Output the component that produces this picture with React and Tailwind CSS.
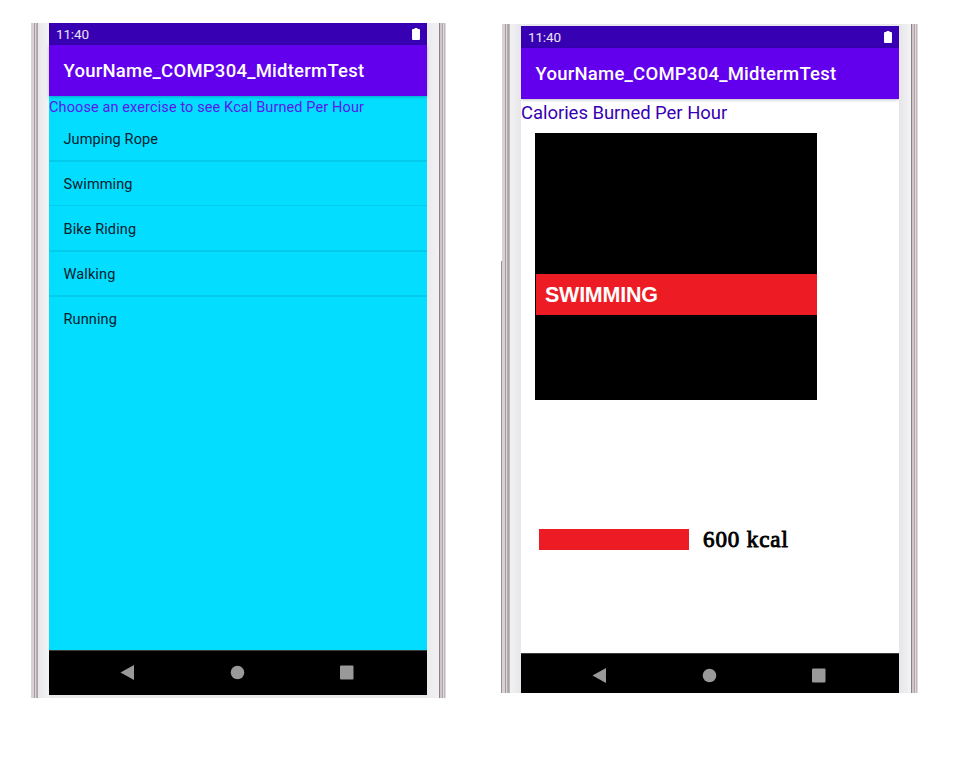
import React from "react";

const EXERCISES = ["Jumping Rope", "Swimming", "Bike Riding", "Walking", "Running"];

function StatusBar() {
  return (
    <div className="flex h-[22px] shrink-0 items-center justify-between bg-[#3700b3] pl-[7px] pr-[7px]">
      <span className="text-[13.500px] leading-[22px] tracking-[-0.15px] text-white/90">11:40</span>
      <svg width="8" height="12" viewBox="0 0 8 12" fill="#fff">
        <path d="M2.500 0h3v1H7a1 1 0 0 1 1 1v9a1 1 0 0 1-1 1H1a1 1 0 0 1-1-1V2a1 1 0 0 1 1-1h1.500z" />
      </svg>
    </div>
  );
}

function AppBar() {
  return (
    <div className="z-10 flex h-[51px] shrink-0 items-center bg-[#6200ee] pl-[14.500px] pt-[2px] shadow-[0_1px_3px_rgba(0,0,0,0.25)]">
      <h1 className="whitespace-nowrap text-[18.500px] font-medium tracking-[0.24px] text-white">YourName_COMP304_MidtermTest</h1>
    </div>
  );
}

function NavBar({ className }) {
  return (
    <div className={"shrink-0 border-t border-[#3c3c3c] bg-black " + className}>
      <svg width="378" height="44" viewBox="0 0 378 44" fill="#999">
        <path d="M71.500 21.500 85 14v15z" />
        <circle cx="188.500" cy="21.500" r="6.800" />
        <rect x="291" y="14.500" width="13.500" height="14" rx="1" />
      </svg>
    </div>
  );
}

function LeftRail() {
  return (
    <div className="flex w-[7px] shrink-0">
      <div className="w-[3px] bg-[#d8d0d3]" />
      <div className="w-px bg-[#a39c9f]" />
      <div className="w-px bg-[#ddd5d8]" />
      <div className="w-px bg-[#b5adb0]" />
      <div className="w-px bg-[#aaa2a6]" />
    </div>
  );
}

function RightRail() {
  return (
    <div className="flex w-[7px] shrink-0">
      <div className="w-px bg-[#858185]" />
      <div className="w-[2px] bg-[#cfc6ca]" />
      <div className="w-px bg-[#b0a6aa]" />
      <div className="w-px bg-[#ded6d8]" />
      <div className="w-px bg-[#c3babd]" />
      <div className="w-px bg-[#ddd7d9]" />
    </div>
  );
}

function ExerciseList() {
  return (
    <div className="flex h-[675px] w-[415px] bg-[#e9e9eb]">
      <LeftRail />
      <div className="w-[11px] shrink-0 bg-linear-to-r from-[#e8e8eb] to-[#f3f3f5]" />
      <div className="flex h-[672px] w-[378px] shrink-0 flex-col bg-[#03ddff]">
        <StatusBar />
        <AppBar />
        <div className="flex min-h-0 flex-1 flex-col">
          <p className="h-[20px] whitespace-nowrap text-[14.500px] leading-[23px] tracking-[0.11px] text-[#5a18ee]">
            Choose an exercise to see Kcal Burned Per Hour
          </p>
          <ul>
            {EXERCISES.map((name, i) => (
              <li
                key={name}
                className={
                  "h-[45px] border-[#03cbec] pl-[14.500px] text-[14.500px] leading-[47px] tracking-[0.12px] text-[#05202a] " +
                  (i === EXERCISES.length - 1 ? "" : i === 1 ? "border-b" : "border-b-2 -mb-px h-[46px]")
                }
              >
                {name}
              </li>
            ))}
          </ul>
        </div>
        <NavBar className="h-[45px]" />
      </div>
      <div className="w-[12px] shrink-0 bg-linear-to-r from-[#eaeaec] to-[#f2f2f4]" />
      <RightRail />
    </div>
  );
}

function CaloriesDetail() {
  return (
    <div className="flex h-[669px] w-[417px]">
      <div className="w-px shrink-0 pt-[237px]">
        <div className="h-full bg-[#969296]" />
      </div>
      <div className="flex w-[416px] bg-[#e9e9eb]">
        <LeftRail />
        <div className="w-px shrink-0 bg-[#bdb6ba]" />
        <div className="w-[11px] shrink-0 bg-linear-to-r from-[#f2f2f4] to-[#e6e6e9]" />
        <div className="mt-[2px] flex w-[378px] shrink-0 flex-col overflow-hidden bg-white">
          <StatusBar />
          <AppBar />
          <div className="flex min-h-0 flex-1 flex-col">
            <p className="h-[34px] whitespace-nowrap text-[18.500px] leading-[28px] tracking-[-0.05px] text-[#3700b3]">
              Calories Burned Per Hour
            </p>
            <div className="ml-[14px] h-[267px] w-[282px] shrink-0 bg-black pl-px pt-[141px]">
              <div className="h-[41px] bg-[#ed1c24] pl-[9px] font-['Liberation_Sans',sans-serif] text-[21.500px] font-bold leading-[42px] tracking-[-0.25px] text-white">
                SWIMMING
              </div>
            </div>
            <div className="ml-[18px] mt-[129px] flex h-[21px] items-center gap-[14px]">
              <div className="h-[21px] w-[150px] bg-[#ed1c24]" />
              <span className="whitespace-nowrap font-['Liberation_Serif',serif] text-[23px] leading-[21px] tracking-[0.9px] text-black [-webkit-text-stroke:0.9px_black]">
                600 kcal
              </span>
            </div>
          </div>
          <NavBar className="h-[40px]" />
        </div>
        <div className="w-[12px] shrink-0 bg-linear-to-r from-[#e6e6e9] to-[#f3f3f5]" />
        <RightRail />
      </div>
    </div>
  );
}

export default function App() {
  return (
    <main className="flex h-[761px] w-[971px] items-start overflow-hidden bg-white pl-[31px] pt-[23px] font-[Roboto,sans-serif]">
      <ExerciseList />
      <div className="ml-[55px] mt-px">
        <CaloriesDetail />
      </div>
    </main>
  );
}
